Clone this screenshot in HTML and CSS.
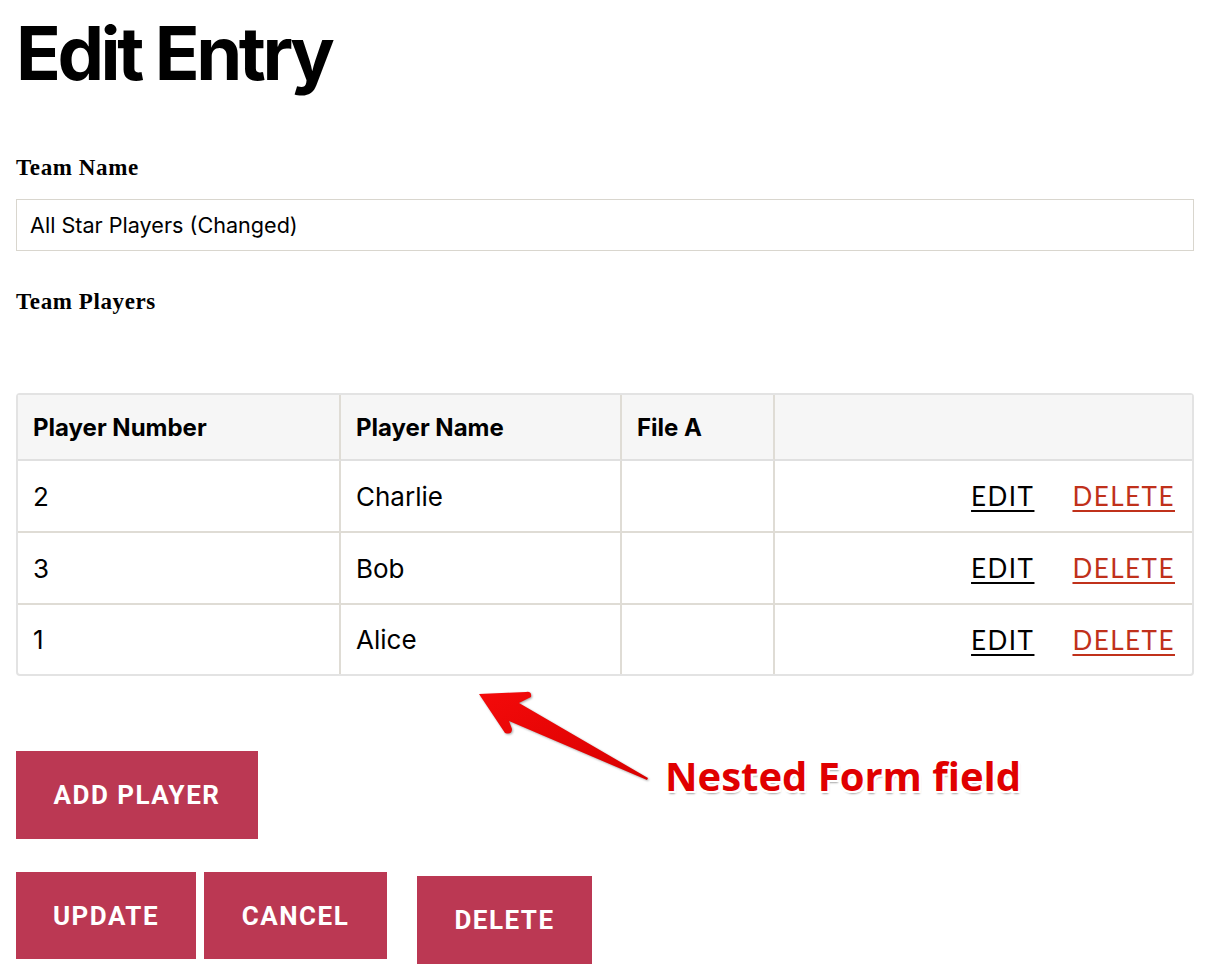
FILE: index.html
```html
<!DOCTYPE html>
<html lang="en">
<head>
<meta charset="utf-8">
<title>Edit Entry</title>
<link rel="stylesheet" href="styles.css">
</head>
<body>
<main class="page">
  <h1 class="title">Edit Entry</h1>

  <div class="field">
    <label class="label" for="team">Team Name</label>
    <input class="input" id="team" type="text" value="All Star Players (Changed)">
  </div>

  <div class="field field-players">
    <div class="label">Team Players</div>
    <table class="players">
      <colgroup>
        <col class="c1"><col class="c2"><col class="c3"><col class="c4">
      </colgroup>
      <thead>
        <tr><th>Player Number</th><th>Player Name</th><th>File A</th><th></th></tr>
      </thead>
      <tbody>
        <tr><td>2</td><td>Charlie</td><td></td><td class="actions"><a class="act edit" href="#">EDIT</a><a class="act del" href="#">DELETE</a></td></tr>
        <tr><td>3</td><td>Bob</td><td></td><td class="actions"><a class="act edit" href="#">EDIT</a><a class="act del" href="#">DELETE</a></td></tr>
        <tr><td>1</td><td>Alice</td><td></td><td class="actions"><a class="act edit" href="#">EDIT</a><a class="act del" href="#">DELETE</a></td></tr>
      </tbody>
    </table>
  </div>

  <div class="add-row">
    <button class="btn btn-add" type="button">ADD PLAYER</button>
  </div>

  <div class="btn-row">
    <button class="btn btn-update" type="submit">UPDATE</button>
    <button class="btn btn-cancel" type="button">CANCEL</button>
    <button class="btn btn-delete" type="button">DELETE</button>
  </div>

  <div class="annotation">
    <svg class="arrow" width="190" height="105" viewBox="0 0 190 105" aria-hidden="true">
      <defs>
        <linearGradient id="ag" x1="0" y1="0" x2="1" y2="1">
          <stop offset="0" stop-color="#f40a0a"/>
          <stop offset="1" stop-color="#d80000"/>
        </linearGradient>
      </defs>
      <path d="M9,9 L56,7 Q62,6 61,12 L49,18 L178,93 L177,95 L39,36 L42,44 Q42,50 35,48 Z" fill="url(#ag)"/>
    </svg>
    <span class="note">Nested Form field</span>
  </div>
</main>
</body>
</html>
```

FILE: styles.css
```css
* { box-sizing: border-box; }

html, body {
  margin: 0;
  background: #ffffff;
}

.page {
  position: relative;
  padding: 0 12px 0 16px;
  font-family: Inter, "Noto Sans", sans-serif;
  color: #000;
}

.title {
  margin: 0;
  padding-top: 15px;
  font-family: Inter, sans-serif;
  font-weight: 700;
  font-size: 74px;
  line-height: 76px;
  letter-spacing: -3.5px;
}

.field { margin-top: 62px; }
.field-players { margin-top: 36px; }

.label {
  display: block;
  font-family: "Liberation Serif", serif;
  font-weight: 700;
  font-size: 23px;
  line-height: 30px;
  letter-spacing: 0.6px;
}

.input {
  display: block;
  width: 100%;
  height: 52px;
  margin-top: 16px;
  padding: 0 13px;
  border: 1px solid #d9d6ce;
  border-radius: 0;
  font-family: Inter, sans-serif;
  font-size: 21.6px;
  color: #000;
  background: #fff;
  outline: none;
}

.players {
  width: 100%;
  margin-top: 76px;
  border-collapse: separate;
  border-spacing: 0;
  border: 2px solid #e3e3e3;
  border-radius: 4px;
  table-layout: fixed;
  font-family: Inter, sans-serif;
}

.c1 { width: 323px; }
.c2 { width: 281px; }
.c3 { width: 153px; }
.c4 { width: auto; }

.players th,
.players td {
  text-align: left;
  border-right: 2px solid #dfdcd5;
  border-bottom: 2px solid #dfdcd5;
  padding: 0 15px;
}
.players th:last-child,
.players td:last-child { border-right: 0; }
.players tbody tr:last-child td { border-bottom: 0; height: 69px; }

.players th {
  height: 66px;
  background: #f6f6f6;
  font-size: 24px;
  font-weight: 700;
  border-bottom-color: #e0e0e0;
}

.players td {
  height: 72px;
  font-size: 26px;
  font-weight: 400;
}

.players td.actions {
  text-align: right;
  padding-right: 17px;
}

.act {
  font-family: Lato, "Open Sans", sans-serif;
  font-size: 26px;
  letter-spacing: 1.5px;
  text-decoration: underline;
  text-decoration-thickness: 2px;
  text-underline-offset: 4px;
}
.edit { color: #000; }
.del { color: #c0311b; margin-left: 38px; }

.btn {
  border: 0;
  border-radius: 0;
  background: #bb3853;
  color: #fff;
  font-family: Roboto, "Liberation Sans", sans-serif;
  font-weight: 700;
  font-size: 26px;
  letter-spacing: 1.5px;
  cursor: pointer;
}

.add-row { margin-top: 75px; }
.btn-add {
  width: 242px;
  height: 88px;
}

.btn-row {
  display: flex;
  align-items: flex-start;
  margin-top: 33px;
}
.btn-update { width: 180px; height: 87px; }
.btn-cancel { width: 183px; height: 87px; margin-left: 8px; }
.btn-delete { width: 175px; height: 88px; margin-left: 30px; margin-top: 4px; }

.annotation {
  position: absolute;
  left: 470px;
  top: 685px;
  width: 580px;
  height: 120px;
  pointer-events: none;
}

.arrow {
  position: absolute;
  left: 0;
  top: 0;
  filter: drop-shadow(1px 1px 1px rgba(0,0,0,0.35));
}

.note {
  position: absolute;
  left: 195px;
  top: 66px;
  font-family: "Open Sans", "Noto Sans", sans-serif;
  font-weight: 700;
  font-size: 40px;
  line-height: 50px;
  white-space: nowrap;
  color: #e00000;
  text-shadow:
    2px 0 0 #fff, -2px 0 0 #fff, 0 2px 0 #fff, 0 -2px 0 #fff,
    2px 2px 0 #fff, -2px -2px 0 #fff, 2px -2px 0 #fff, -2px 2px 0 #fff,
    1px 3px 2px rgba(0,0,0,0.35);
}
```
